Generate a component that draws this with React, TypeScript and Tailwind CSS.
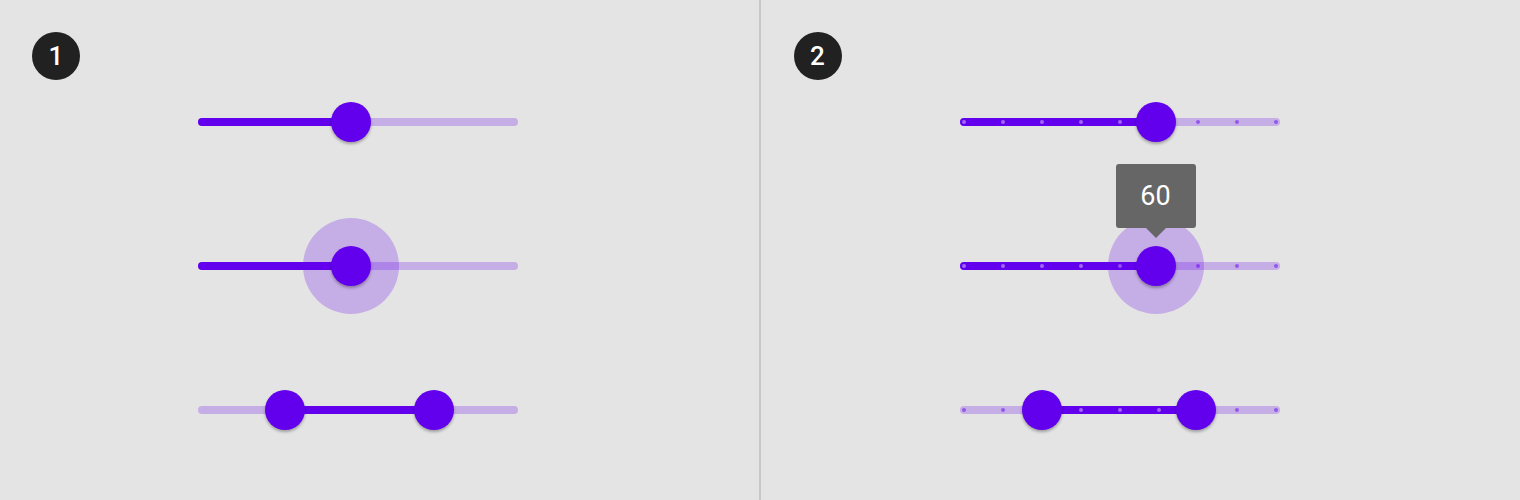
import React from 'react';

const DOTS = [4, 43, 82, 121, 160, 199, 238, 277, 316];

interface SliderProps {
  thumbs: number[];
  range?: boolean;
  halo?: boolean;
  ticks?: boolean;
  label?: string;
}

const Slider: React.FC<SliderProps> = ({ thumbs, range, halo, ticks, label }) => {
  const start = range ? thumbs[0] : 0;
  const end = range ? thumbs[1] : thumbs[0];

  return (
    <div className="relative w-[320px] h-10">
      {/* inactive track */}
      <div className="absolute left-0 right-0 top-1/2 -translate-y-1/2 h-2 rounded-full bg-[#6200ee]/[0.24]" />
      {/* active track */}
      <div
        className="absolute top-1/2 -translate-y-1/2 h-2 rounded-full bg-[#6200ee]"
        style={{ left: start, width: end - start }}
      />
      {ticks &&
        DOTS.map((d) => (
          <div
            key={d}
            className={
              d >= start && d <= end
                ? 'absolute top-1/2 -translate-y-1/2 -translate-x-1/2 w-1 h-1 rounded-full bg-white/40'
                : 'absolute top-1/2 -translate-y-1/2 -translate-x-1/2 w-1 h-1 rounded-full bg-[#6200ee]/50'
            }
            style={{ left: d }}
          />
        ))}
      {thumbs.map((t, i) => (
        <div key={i} className="absolute top-1/2 -translate-x-1/2 -translate-y-1/2" style={{ left: t }}>
          <div className="relative w-10 h-10">
            {halo && (
              <div className="absolute left-1/2 top-1/2 -translate-x-1/2 -translate-y-1/2 w-24 h-24 rounded-full bg-[#6200ee]/[0.24]" />
            )}
            <div className="relative w-10 h-10 rounded-full bg-[#6200ee] shadow-[0_2px_3px_rgba(0,0,0,0.3)]" />
            {label && (
              <div className="absolute left-1/2 -translate-x-1/2 bottom-[48px] flex flex-col items-center">
                <div className="w-20 h-16 rounded-[3px] bg-[#666666] flex items-center justify-center text-white text-[27px] font-['Roboto',sans-serif]">
                  {label}
                </div>
                <div className="w-0 h-0 border-l-[10px] border-r-[10px] border-t-[10px] border-l-transparent border-r-transparent border-t-[#666666]" />
              </div>
            )}
          </div>
        </div>
      ))}
    </div>
  );
};

const Panel: React.FC<{ num: string; ticks?: boolean }> = ({ num, ticks }) => (
  <div className={ticks ? 'flex-1 pt-8 pl-[33px]' : 'flex-1 pt-8 pl-8'}>
    <div className="w-12 h-12 rounded-full bg-[#212121] flex items-center justify-center text-white text-[26px] font-medium font-['Roboto',sans-serif]">
      {num}
    </div>
    <div className="ml-[166px] mt-[22px] flex flex-col gap-[104px]">
      {ticks ? (
        <>
          <Slider thumbs={[196]} ticks />
          <Slider thumbs={[196]} ticks halo label="60" />
          <Slider thumbs={[82, 236]} range ticks />
        </>
      ) : (
        <>
          <Slider thumbs={[153]} />
          <Slider thumbs={[153]} halo />
          <Slider thumbs={[87, 236]} range />
        </>
      )}
    </div>
  </div>
);

export default function App() {
  return (
    <div className="w-[1520px] h-[500px] bg-[#e4e4e4] flex overflow-hidden">
      <Panel num="1" />
      <div className="w-[2px] bg-[#c8c8c8]" />
      <Panel num="2" ticks />
    </div>
  );
}
